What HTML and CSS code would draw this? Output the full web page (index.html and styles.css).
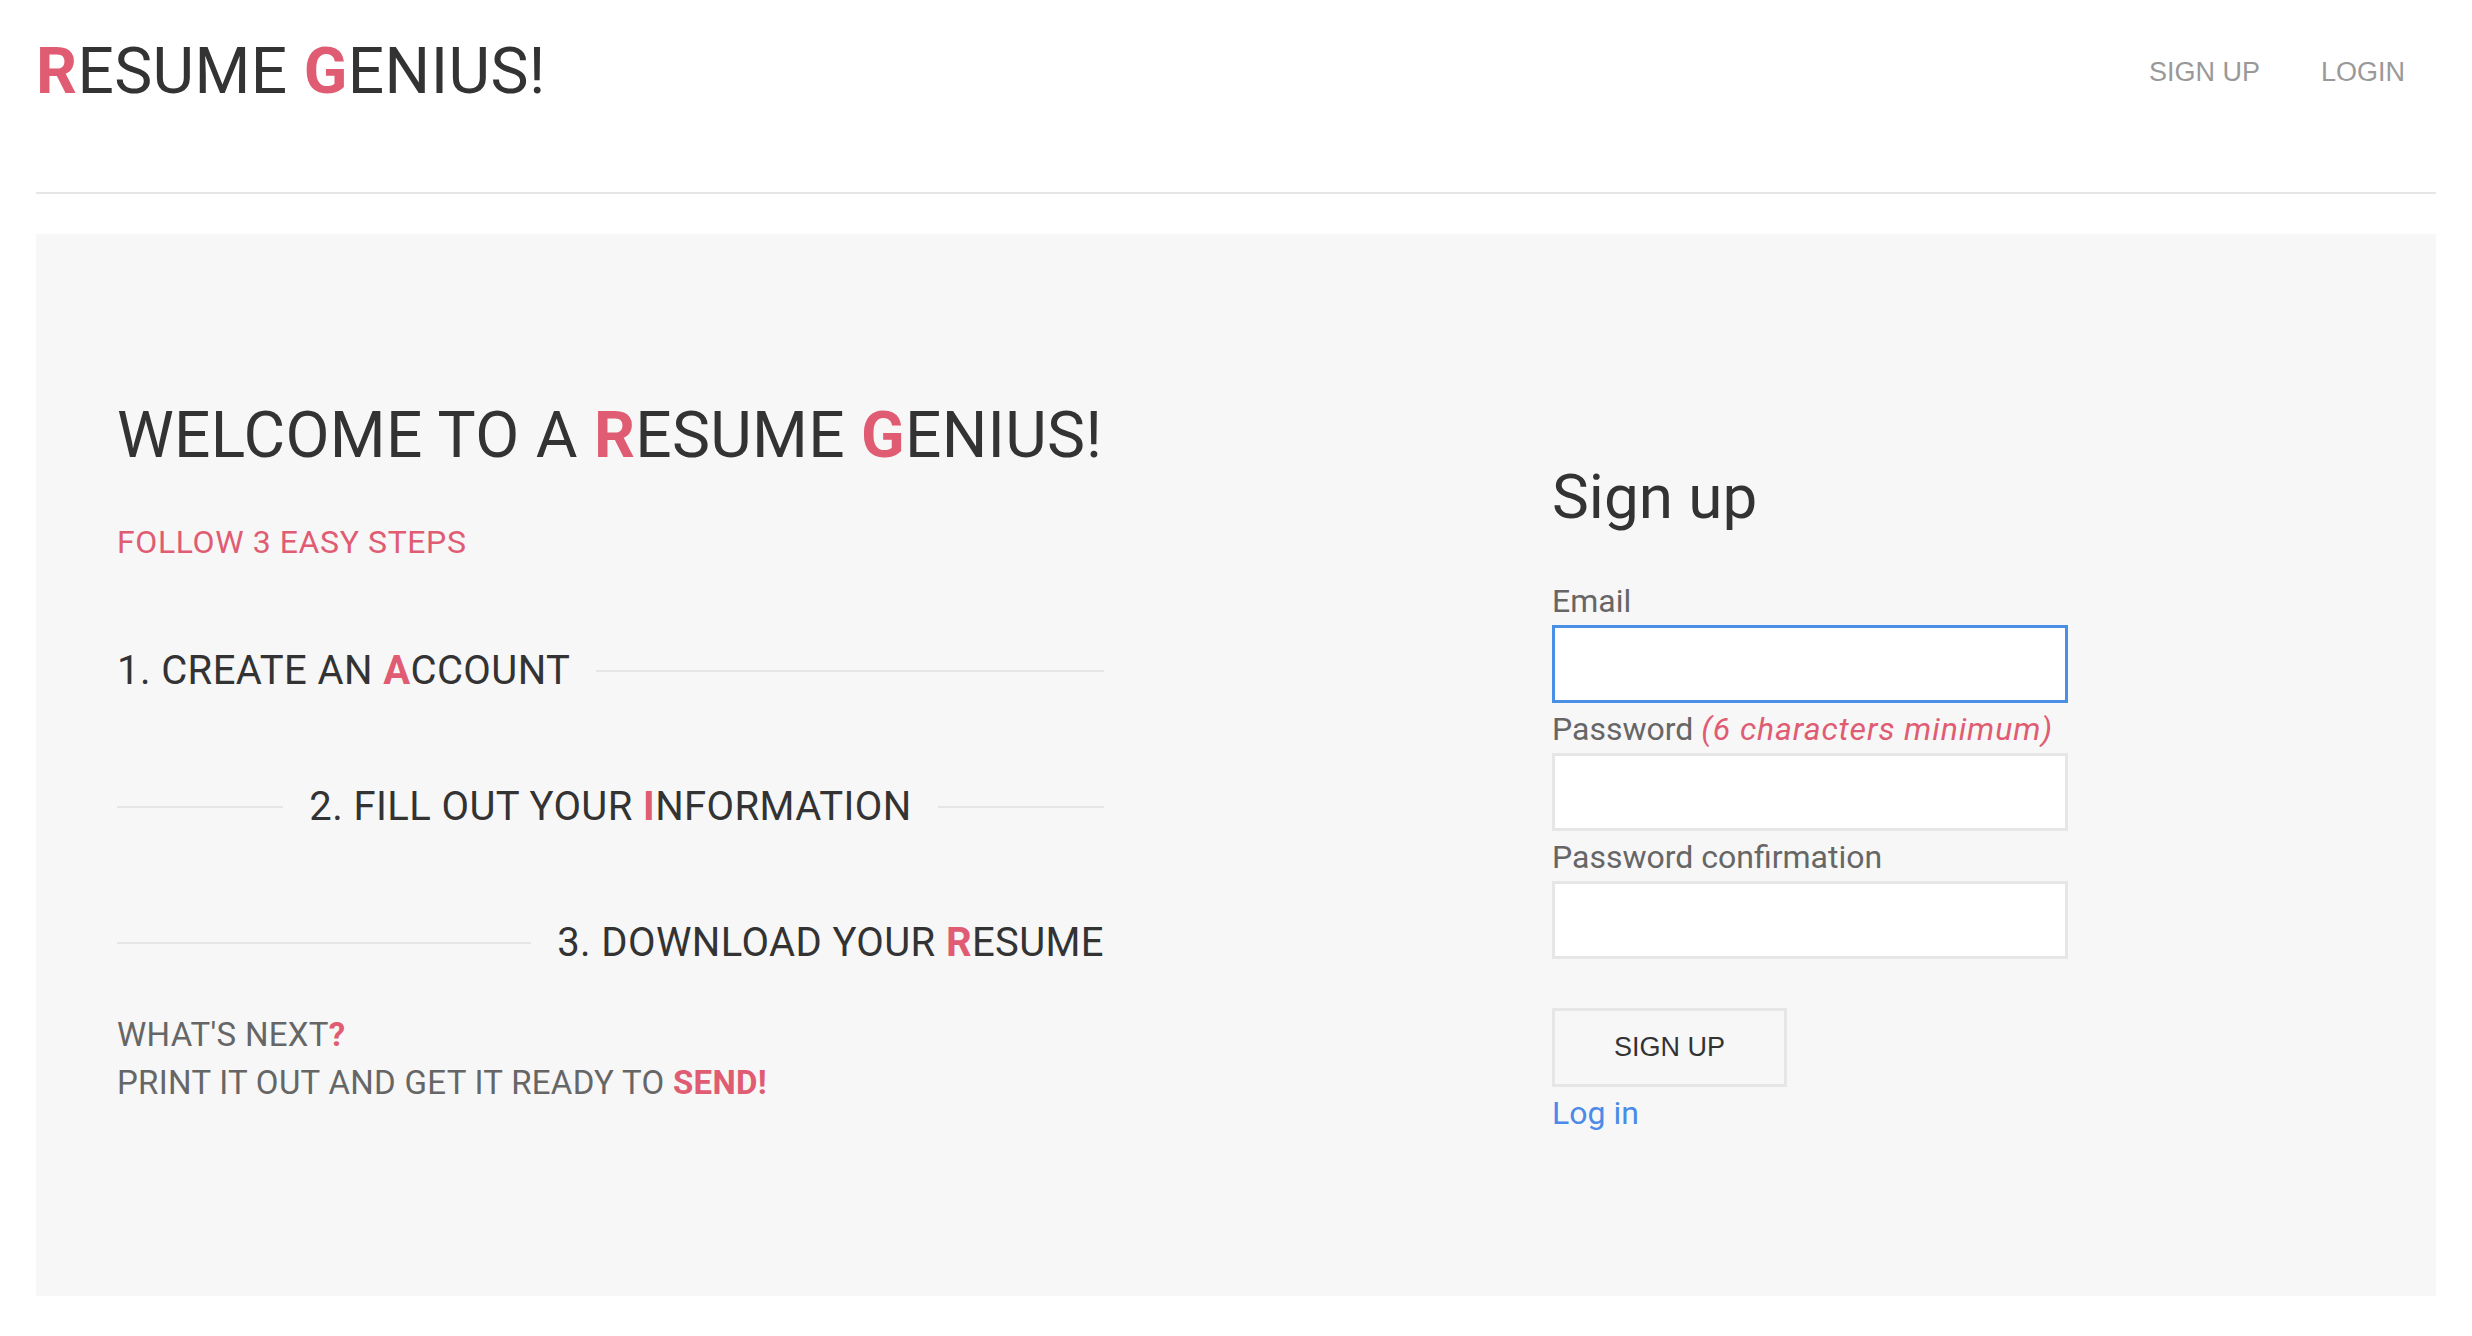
FILE: index.html
```html
<!DOCTYPE html>
<html lang="en">
<head>
<meta charset="utf-8">
<title>Resume Genius</title>
<link rel="stylesheet" href="styles.css">
</head>
<body>
<div class="page">
  <header class="site-header">
    <div class="logo"><span class="accent">R</span>ESUME <span class="accent">G</span>ENIUS!</div>
    <nav class="nav">
      <a class="nav-link" href="#">SIGN UP</a>
      <a class="nav-link" href="#">LOGIN</a>
    </nav>
  </header>

  <main class="band">
    <section class="intro">
      <h1 class="welcome">WELCOME TO A <span class="accent">R</span>ESUME <span class="accent">G</span>ENIUS!</h1>
      <p class="follow">FOLLOW 3 EASY STEPS</p>
      <div class="steps">
        <div class="step">
          <span class="step-text">1. CREATE AN <span class="accent">A</span>CCOUNT</span>
          <span class="step-line"></span>
        </div>
        <div class="step">
          <span class="step-line"></span>
          <span class="step-text">2. FILL OUT YOUR <span class="accent">I</span>NFORMATION</span>
          <span class="step-line"></span>
        </div>
        <div class="step">
          <span class="step-line"></span>
          <span class="step-text">3. DOWNLOAD YOUR <span class="accent">R</span>ESUME</span>
        </div>
      </div>
      <p class="next">WHAT'S NEXT<span class="accent-bold">?</span><br>PRINT IT OUT AND GET IT READY TO <span class="accent-bold">SEND!</span></p>
    </section>

    <section class="signup">
      <h2 class="signup-title">Sign up</h2>
      <form class="form">
        <label class="field-label" for="email">Email</label>
        <input class="field-input is-focused" id="email" type="email">
        <label class="field-label" for="password">Password <em class="hint">(6 characters minimum)</em></label>
        <input class="field-input" id="password" type="password">
        <label class="field-label" for="confirm">Password confirmation</label>
        <input class="field-input" id="confirm" type="password">
        <button class="submit" type="button">SIGN UP</button>
      </form>
      <a class="login-link" href="#">Log in</a>
    </section>
  </main>
</div>
</body>
</html>
```

FILE: styles.css
```css
* { box-sizing: border-box; }

html, body {
  margin: 0;
  padding: 0;
  background: #ffffff;
}

body {
  font-family: Roboto, "Liberation Sans", Arial, sans-serif;
  color: #333333;
}

.page {
  padding: 0 36px;
}

.accent { color: #e05c73; }
.accent-bold { color: #e05c73; font-weight: 700; }

/* Header */
.site-header {
  display: flex;
  justify-content: space-between;
  align-items: flex-start;
  padding: 40px 31px 88px 0;
  border-bottom: 2px solid #e6e6e6;
}

.logo {
  font-size: 64px;
  line-height: 64px;
  color: #333333;
  letter-spacing: 0.4px;
}

.logo .accent { font-weight: 700; }

.nav {
  display: flex;
  gap: 61px;
  margin-top: 19px;
}

.nav-link {
  font-family: "Liberation Sans", Arial, sans-serif;
  font-size: 27px;
  line-height: 27px;
  color: #999999;
  text-decoration: none;
}

/* Band */
.band {
  margin-top: 40px;
  background: #f7f7f7;
  display: flex;
  align-items: flex-start;
  padding: 170px 0 0 81px;
  height: 1062px;
}

.intro {
  width: 987px;
  flex: none;
}

.welcome {
  margin: 0;
  font-size: 64px;
  line-height: 64px;
  font-weight: 400;
  color: #333333;
  letter-spacing: 0.3px;
}

.welcome .accent { font-weight: 700; }

.follow {
  margin: 58px 0 0;
  font-size: 32px;
  line-height: 32px;
  letter-spacing: 0.6px;
  color: #e05c73;
}

.steps {
  margin-top: 93px;
  display: flex;
  flex-direction: column;
  gap: 96px;
}

.step {
  display: flex;
  align-items: center;
  gap: 26px;
  height: 40px;
}

.step-text {
  font-size: 40px;
  line-height: 40px;
  letter-spacing: 0.4px;
  color: #333333;
  white-space: nowrap;
  flex: none;
}

.step-text .accent { font-weight: 700; }

.step-line {
  flex: 1;
  height: 2px;
  background: #e6e6e6;
}

.next {
  margin: 48px 0 0;
  font-size: 33px;
  line-height: 48px;
  letter-spacing: 0.3px;
  color: #666666;
}

/* Sign up */
.signup {
  margin-left: 448px;
  margin-top: 61px;
  width: 516px;
  flex: none;
}

.signup-title {
  margin: 0;
  font-size: 62px;
  line-height: 64px;
  font-weight: 400;
  color: #333333;
}

.form {
  margin-top: 53px;
  display: flex;
  flex-direction: column;
  align-items: flex-start;
}

.field-label {
  display: block;
  font-size: 32px;
  line-height: 38px;
  color: #666666;
  margin-bottom: 5px;
}

.hint {
  color: #e05c73;
  letter-spacing: 0.9px;
}

.field-input {
  display: block;
  width: 516px;
  height: 78px;
  margin: 0 0 7px;
  border: 3px solid #e6e6e6;
  background: #ffffff;
  border-radius: 0;
  outline: none;
  font-size: 28px;
  padding: 0 12px;
}

.field-input.is-focused {
  border-color: #4a8fe6;
}

.submit {
  margin-top: 42px;
  width: 235px;
  height: 79px;
  border: 3px solid #e6e6e6;
  background: #f7f7f7;
  color: #333333;
  font-family: "Liberation Sans", Arial, sans-serif;
  font-size: 27px;
  border-radius: 0;
  padding: 0;
}

.login-link {
  display: inline-block;
  margin-top: 7px;
  font-size: 32px;
  line-height: 38px;
  color: #4a8ae8;
  text-decoration: none;
}
```
